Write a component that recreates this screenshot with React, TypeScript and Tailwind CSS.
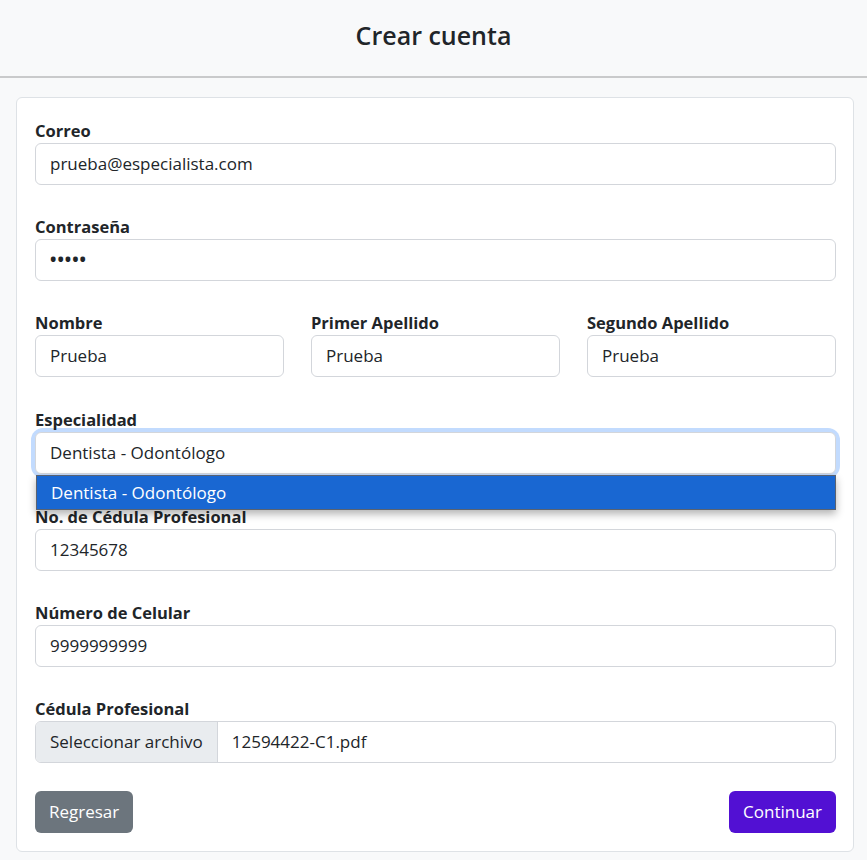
import React from 'react';

const font = { fontFamily: '"Segoe UI", "Open Sans", "Noto Sans", sans-serif' };

function Label({ children }: { children: React.ReactNode }) {
  return <label className="block text-[16.5px] leading-[24px] font-bold text-[#212529]">{children}</label>;
}

function Field({ value, className = '' }: { value: string; className?: string }) {
  return (
    <div
      className={`flex h-[42px] items-center rounded-[6px] border border-[#d3d6db] bg-white px-[14px] text-[17px] text-[#212529] ${className}`}
    >
      {value}
    </div>
  );
}

export default function App() {
  return (
    <div style={font} className="min-h-[860px] bg-[#f8f9fa]">
      <header className="flex h-[78px] items-center justify-center border-b-2 border-[#c9cacb] bg-[#f8f9fa] pb-[4px]">
        <h1 className="text-[25px] font-semibold text-[#212529]">Crear cuenta</h1>
      </header>

      <div className="ml-[16px] mr-[13px] mt-[19px] rounded-[6px] border border-[#dee2e6] bg-white pl-[18px] pr-[17px] pt-[21px] pb-[18px]">
        <div className="mb-[30px]">
          <Label>Correo</Label>
          <Field value="prueba@especialista.com" />
        </div>

        <div className="mb-[30px]">
          <Label>Contraseña</Label>
          <Field value="•••••" className="tracking-[1px] font-bold" />
        </div>

        <div className="mb-[31px] grid grid-cols-3 gap-x-[27px]">
          <div>
            <Label>Nombre</Label>
            <Field value="Prueba" />
          </div>
          <div>
            <Label>Primer Apellido</Label>
            <Field value="Prueba" />
          </div>
          <div>
            <Label>Segundo Apellido</Label>
            <Field value="Prueba" />
          </div>
        </div>

        <div className="relative mb-[31px]">
          <Label>Especialidad</Label>
          <div className="rounded-[8px] shadow-[0_0_0_4px_rgba(13,110,253,0.25)]">
            <Field value="Dentista - Odontólogo" className="border-[#86b7fe]" />
          </div>
          <div className="absolute left-[1px] right-0 top-[67px] z-10 flex h-[35px] items-center border border-[#5a6270] bg-[#1967d2] px-[14px] text-[17px] text-white shadow-[0_4px_8px_rgba(0,0,0,0.3)]">
            Dentista - Odontólogo
          </div>
        </div>

        <div className="mb-[30px]">
          <Label>No. de Cédula Profesional</Label>
          <Field value="12345678" />
        </div>

        <div className="mb-[30px]">
          <Label>Número de Celular</Label>
          <Field value="9999999999" />
        </div>

        <div className="mb-[28px]">
          <Label>Cédula Profesional</Label>
          <div className="flex h-[42px] items-stretch overflow-hidden rounded-[6px] border border-[#d3d6db] bg-white text-[17px] text-[#212529]">
            <div className="flex items-center border-r border-[#d3d6db] bg-[#e9ecef] px-[14px]">Seleccionar archivo</div>
            <div className="flex items-center px-[14px]">12594422-C1.pdf</div>
          </div>
        </div>

        <div className="flex items-center justify-between">
          <button className="h-[42px] rounded-[6px] bg-[#6c757d] px-[14px] text-[17px] text-white">Regresar</button>
          <button className="h-[42px] rounded-[6px] bg-[#5210d3] px-[14px] text-[17px] text-white">Continuar</button>
        </div>
      </div>
    </div>
  );
}
